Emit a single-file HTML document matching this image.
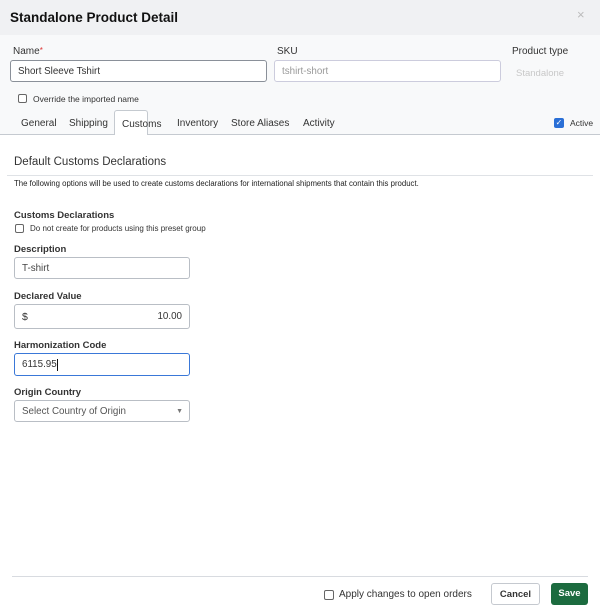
<!DOCTYPE html>
<html><head><style>
*{box-sizing:border-box;margin:0;padding:0}
body{width:600px;height:616px;background:#fff;font-family:"Liberation Sans",Arial,sans-serif;color:#222;position:relative;overflow:hidden}
.a{position:absolute}
.hdr{left:0;top:0;width:600px;height:35px;background:#f0f1f3}
.top{left:0;top:35px;width:600px;height:99px;background:#f8f9fa}
.inp{position:absolute;border:1px solid #b9bec5;border-radius:3px;background:#fff;font-size:9.8px;padding-left:7px;display:flex;align-items:center}
.lbl{position:absolute;font-size:10px;color:#333}
.bl{position:absolute;font-size:9.5px;font-weight:bold;color:#333}
.cb{position:absolute;width:9px;height:9px;border:1px solid #666;border-radius:2px;background:#fff}
.tab{position:absolute;top:118px;font-size:10px;color:#333}
</style></head><body>
<div class="a hdr"></div>
<div class="a top"></div>
<div class="a" style="left:10px;top:10px;font-size:13.5px;font-weight:bold;color:#111">Standalone Product Detail</div>
<div class="a" style="left:577px;top:7px;font-size:13px;color:#bbb">×</div>

<div class="lbl" style="left:13px;top:46px">Name<span style="color:#d33;font-size:8px;vertical-align:top">*</span></div>
<div class="inp" style="left:10px;top:60px;width:257px;height:22px;border-color:#8a9099;color:#333">Short Sleeve Tshirt</div>
<div class="lbl" style="left:277px;top:46px">SKU</div>
<div class="inp" style="left:274px;top:60px;width:227px;height:22px;border-color:#ccd;color:#999">tshirt-short</div>
<div class="lbl" style="left:512px;top:46px">Product type</div>
<div class="a" style="left:516px;top:68px;font-size:9.5px;color:#c8c8c8">Standalone</div>

<div class="cb" style="left:18px;top:94px"></div>
<div class="a" style="left:33px;top:94px;font-size:8.5px;color:#333">Override the imported name</div>

<div class="a" style="left:0;top:134px;width:600px;border-top:1px solid #c5cad0"></div>
<div class="a" style="left:114px;top:110px;width:34px;height:25px;background:#fff;border:1px solid #c5cad0;border-bottom:none;border-radius:3px 3px 0 0"></div>
<div class="tab" style="left:21px">General</div>
<div class="tab" style="left:69px">Shipping</div>
<div class="tab" style="left:122px;top:119px">Customs</div>
<div class="tab" style="left:177px">Inventory</div>
<div class="tab" style="left:231px">Store Aliases</div>
<div class="tab" style="left:303px">Activity</div>
<div class="a" style="left:554px;top:118px;width:10px;height:10px;background:#2a6fd6;border-radius:2px;color:#fff;font-size:8px;line-height:10px;text-align:center">✓</div>
<div class="a" style="left:570px;top:118px;font-size:8.5px;color:#333">Active</div>

<div class="a" style="left:14px;top:156px;font-size:11.5px;color:#333">Default Customs Declarations</div>
<div class="a" style="left:7px;top:175px;width:586px;border-top:1px solid #dfe2e6"></div>
<div class="a" style="left:14px;top:179px;font-size:7.8px;color:#222">The following options will be used to create customs declarations for international shipments that contain this product.</div>

<div class="bl" style="left:14px;top:210px">Customs Declarations</div>
<div class="cb" style="left:15px;top:224px"></div>
<div class="a" style="left:30px;top:224px;font-size:8px;color:#333">Do not create for products using this preset group</div>

<div class="bl" style="left:14px;top:244px">Description</div>
<div class="inp" style="left:14px;top:257px;width:176px;height:22px;color:#444">T-shirt</div>
<div class="bl" style="left:14px;top:291px">Declared Value</div>
<div class="inp" style="left:14px;top:304px;width:176px;height:25px;color:#333;font-size:10.5px;justify-content:space-between;padding-right:7px">$<span style="font-size:9.8px">10.00</span></div>
<div class="bl" style="left:14px;top:340px">Harmonization Code</div>
<div class="inp" style="left:14px;top:353px;width:176px;height:23px;border-color:#3a78d8;color:#333">6115.95<span style="display:inline-block;width:1px;height:12px;background:#111"></span></div>
<div class="bl" style="left:14px;top:387px">Origin Country</div>
<div class="inp" style="left:14px;top:400px;width:176px;height:22px;color:#555;justify-content:space-between;padding-right:6px">Select Country of Origin<span style="font-size:7px;color:#777">▼</span></div>

<div class="a" style="left:12px;top:576px;width:576px;border-top:1px solid #d8dbe0"></div>
<div class="cb" style="left:324px;top:590px;width:10px;height:10px"></div>
<div class="a" style="left:339px;top:589px;font-size:10px;color:#333">Apply changes to open orders</div>
<div class="a" style="left:491px;top:583px;width:49px;height:22px;border:1px solid #c5c9cf;border-radius:3px;font-size:9.5px;font-weight:bold;color:#333;text-align:center;line-height:21px">Cancel</div>
<div class="a" style="left:551px;top:583px;width:37px;height:22px;background:#1c6b3f;border-radius:3px;font-size:9.5px;font-weight:bold;color:#fff;text-align:center;line-height:22px">Save</div>
</body></html>
